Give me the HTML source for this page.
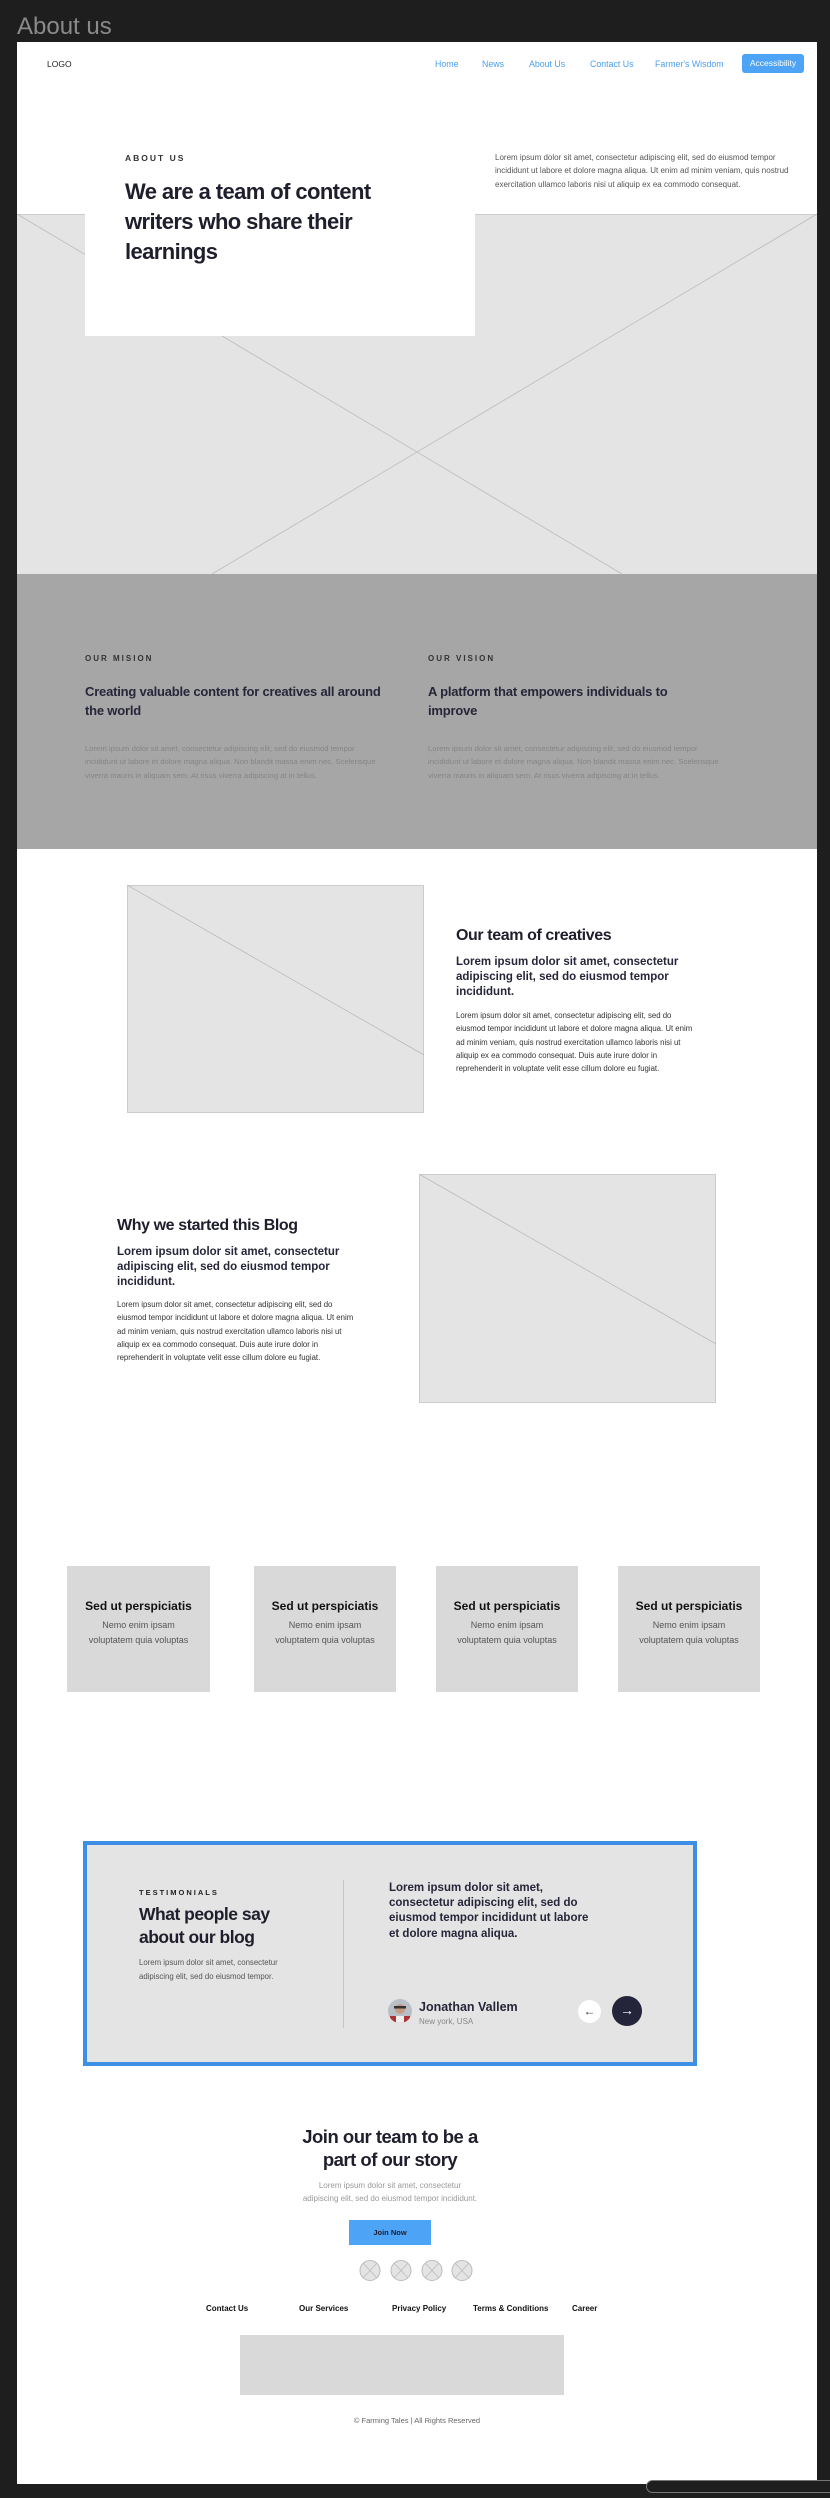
<!DOCTYPE html>
<html><head><meta charset="utf-8">
<style>
*{margin:0;padding:0;box-sizing:border-box}
body{width:830px;height:2498px;background:#1e1e1e;position:relative;overflow:hidden;font-family:"Liberation Sans",sans-serif;color:#22222e}
.a{position:absolute;white-space:nowrap}
.panel{position:absolute;left:17px;top:42px;width:800px;height:2442px;background:#fff}
.nav{font-size:8.8px;color:#4a9ff0;top:59px}
.lbl{font-size:8.5px;letter-spacing:2px;color:#333;font-weight:bold}
.card{position:absolute;top:1566px;height:126px;background:#d9d9d9;text-align:center}
.card b{display:block;font-size:12px;margin-top:33px;color:#111}
.card p{font-size:9px;color:#555;line-height:15px;margin-top:5px}
.fl{font-size:8px;font-weight:bold;color:#111;top:2304px}
</style></head><body>
<div class="a" style="left:17px;top:13px;font-size:24px;color:#8a8a8a">About us</div>
<div class="panel"></div>
<div class="a" style="left:47px;top:59px;font-size:8.5px;color:#222">LOGO</div>
<div class="a nav" style="left:435px">Home</div>
<div class="a nav" style="left:482px">News</div>
<div class="a nav" style="left:529px">About Us</div>
<div class="a nav" style="left:590px">Contact Us</div>
<div class="a nav" style="left:655px">Farmer's Wisdom</div>
<div class="a" style="left:742px;top:54px;width:62px;height:19px;background:#4da3f5;border-radius:3px;color:#fff;font-size:8.5px;text-align:center;line-height:19px">Accessibility</div>

<svg class="a" style="left:17px;top:214px" width="800" height="360"><rect width="800" height="360" fill="#e4e4e4"/><line x1="0" y1="0.5" x2="800" y2="0.5" stroke="#ccc"/><line x1="0" y1="0" x2="605" y2="360" stroke="#bbb" stroke-width="0.8"/><line x1="800" y1="0" x2="195" y2="360" stroke="#bbb" stroke-width="0.8"/></svg>
<div class="a" style="left:85px;top:214px;width:390px;height:122px;background:#fff"></div>
<div class="a lbl" style="left:125px;top:153px;font-size:8.5px">ABOUT US</div>
<div class="a" style="left:125px;top:177px;font-size:22px;font-weight:bold;line-height:30px;letter-spacing:-0.6px;color:#1e1e2c">We are a team of content<br>writers who share their<br>learnings</div>
<div class="a" style="left:495px;top:151px;font-size:8px;line-height:13.3px;color:#555">Lorem ipsum dolor sit amet, consectetur adipiscing elit, sed do eiusmod tempor<br>incididunt ut labore et dolore magna aliqua. Ut enim ad minim veniam, quis nostrud<br>exercitation ullamco laboris nisi ut aliquip ex ea commodo consequat.</div>

<div class="a" style="left:17px;top:574px;width:800px;height:275px;background:#a6a6a6"></div>
<div class="a lbl" style="left:85px;top:654px;font-size:8px">OUR MISION</div>
<div class="a lbl" style="left:428px;top:654px;font-size:8px">OUR VISION</div>
<div class="a" style="left:85px;top:682px;font-size:13px;font-weight:bold;line-height:19px;color:#26263a;letter-spacing:-0.2px">Creating valuable content for creatives all around<br>the world</div>
<div class="a" style="left:428px;top:682px;font-size:13px;font-weight:bold;line-height:19px;color:#26263a;letter-spacing:-0.2px">A platform that empowers individuals to<br>improve</div>
<div class="a" style="left:85px;top:742px;font-size:7.7px;line-height:13.4px;color:#858585">Lorem ipsum dolor sit amet, consectetur adipiscing elit, sed do eiusmod tempor<br>incididunt ut labore et dolore magna aliqua. Non blandit massa enim nec. Scelerisque<br>viverra mauris in aliquam sem. At risus viverra adipiscing at in tellus.</div>
<div class="a" style="left:428px;top:742px;font-size:7.7px;line-height:13.4px;color:#858585">Lorem ipsum dolor sit amet, consectetur adipiscing elit, sed do eiusmod tempor<br>incididunt ut labore et dolore magna aliqua. Non blandit massa enim nec. Scelerisque<br>viverra mauris in aliquam sem. At risus viverra adipiscing at in tellus.</div>

<svg class="a" style="left:127px;top:885px" width="297" height="228"><rect x="0.5" y="0.5" width="296" height="227" fill="#e4e4e4" stroke="#ccc"/><line x1="0" y1="0" x2="297" y2="170" stroke="#bbb" stroke-width="0.8"/></svg>
<div class="a" style="left:456px;top:927px;font-size:16px;font-weight:bold;color:#1e1e2c;letter-spacing:-0.4px">Our team of creatives</div>
<div class="a" style="left:456px;top:955px;font-size:11.5px;font-weight:bold;line-height:15px;color:#26263a">Lorem ipsum dolor sit amet, consectetur<br>adipiscing elit, sed do eiusmod tempor<br>incididunt.</div>
<div class="a" style="left:456px;top:1009px;font-size:7.8px;line-height:13.3px;color:#333">Lorem ipsum dolor sit amet, consectetur adipiscing elit, sed do<br>eiusmod tempor incididunt ut labore et dolore magna aliqua. Ut enim<br>ad minim veniam, quis nostrud exercitation ullamco laboris nisi ut<br>aliquip ex ea commodo consequat. Duis aute irure dolor in<br>reprehenderit in voluptate velit esse cillum dolore eu fugiat.</div>

<svg class="a" style="left:419px;top:1174px" width="297" height="229"><rect x="0.5" y="0.5" width="296" height="228" fill="#e4e4e4" stroke="#ccc"/><line x1="0" y1="0" x2="297" y2="170" stroke="#bbb" stroke-width="0.8"/></svg>
<div class="a" style="left:117px;top:1217px;font-size:16px;font-weight:bold;color:#1e1e2c;letter-spacing:-0.4px">Why we started this Blog</div>
<div class="a" style="left:117px;top:1245px;font-size:11.5px;font-weight:bold;line-height:15px;color:#26263a">Lorem ipsum dolor sit amet, consectetur<br>adipiscing elit, sed do eiusmod tempor<br>incididunt.</div>
<div class="a" style="left:117px;top:1298px;font-size:7.8px;line-height:13.3px;color:#333">Lorem ipsum dolor sit amet, consectetur adipiscing elit, sed do<br>eiusmod tempor incididunt ut labore et dolore magna aliqua. Ut enim<br>ad minim veniam, quis nostrud exercitation ullamco laboris nisi ut<br>aliquip ex ea commodo consequat. Duis aute irure dolor in<br>reprehenderit in voluptate velit esse cillum dolore eu fugiat.</div>

<div class="card" style="left:67px;width:143px"><b>Sed ut perspiciatis</b><p>Nemo enim ipsam<br>voluptatem quia voluptas</p></div>
<div class="card" style="left:254px;width:142px"><b>Sed ut perspiciatis</b><p>Nemo enim ipsam<br>voluptatem quia voluptas</p></div>
<div class="card" style="left:436px;width:142px"><b>Sed ut perspiciatis</b><p>Nemo enim ipsam<br>voluptatem quia voluptas</p></div>
<div class="card" style="left:618px;width:142px"><b>Sed ut perspiciatis</b><p>Nemo enim ipsam<br>voluptatem quia voluptas</p></div>

<div class="a" style="left:83px;top:1841px;width:614px;height:225px;background:#e4e4e4;border:4px solid #3d8fe6"></div>
<div class="a lbl" style="left:139px;top:1888px;font-size:7.5px;color:#222">TESTIMONIALS</div>
<div class="a" style="left:139px;top:1903px;font-size:17.5px;font-weight:bold;line-height:23px;color:#1e1e2c;letter-spacing:-0.5px">What people say<br>about our blog</div>
<div class="a" style="left:139px;top:1956px;font-size:7.8px;line-height:14px;color:#555">Lorem ipsum dolor sit amet, consectetur<br>adipiscing elit, sed do eiusmod tempor.</div>
<div class="a" style="left:343px;top:1880px;width:1px;height:148px;background:#c4c4c4"></div>
<div class="a" style="left:389px;top:1881px;font-size:11.5px;font-weight:bold;line-height:15.2px;color:#26263a">Lorem ipsum dolor sit amet,<br>consectetur adipiscing elit, sed do<br>eiusmod tempor incididunt ut labore<br>et dolore magna aliqua.</div>
<svg class="a" style="left:388px;top:1999px" width="24" height="24"><defs><clipPath id="c"><circle cx="12" cy="12" r="12"/></clipPath></defs><g clip-path="url(#c)"><rect width="24" height="24" fill="#b9bfc6"/><circle cx="12" cy="10" r="5" fill="#c89b86"/><rect x="6" y="7" width="12" height="2.5" fill="#333"/><rect x="2" y="17" width="20" height="8" fill="#a33"/><rect x="8" y="17" width="8" height="8" fill="#eee"/></g></svg>
<div class="a" style="left:419px;top:2000px;font-size:12.5px;font-weight:bold;color:#26263a">Jonathan Vallem</div>
<div class="a" style="left:419px;top:2017px;font-size:8px;color:#888">New york, USA</div>
<div class="a" style="left:578px;top:2000px;width:23px;height:23px;border-radius:50%;background:#fff;color:#333;font-size:12px;text-align:center;line-height:22px">&#8592;</div>
<div class="a" style="left:612px;top:1996px;width:30px;height:30px;border-radius:50%;background:#24243a;color:#fff;font-size:14px;text-align:center;line-height:29px">&#8594;</div>

<div class="a" style="left:190px;width:400px;top:2125px;text-align:center;font-size:18.5px;font-weight:bold;line-height:23px;color:#1e1e2c;letter-spacing:-0.5px">Join our team to be a<br>part of our story</div>
<div class="a" style="left:190px;width:400px;top:2179px;text-align:center;font-size:8px;line-height:13px;color:#999">Lorem ipsum dolor sit amet, consectetur<br>adipiscing elit, sed do eiusmod tempor incididunt.</div>
<div class="a" style="left:349px;top:2220px;width:82px;height:25px;background:#4da3f5;font-size:7.5px;font-weight:bold;color:#1e1e2c;text-align:center;line-height:25px">Join Now</div>
<svg class="a" style="left:359px;top:2259px" width="115" height="23">
<g fill="#e4e4e4" stroke="#bbb" stroke-width="1">
<circle cx="11" cy="11.5" r="10"/><circle cx="42" cy="11.5" r="10"/><circle cx="73" cy="11.5" r="10"/><circle cx="103" cy="11.5" r="10"/></g>
<g stroke="#bbb" stroke-width="0.8"><path d="M4 4L18 19M18 4L4 19M35 4L49 19M49 4L35 19M66 4L80 19M80 4L66 19M96 4L110 19M110 4L96 19"/></g></svg>
<div class="a fl" style="left:206px">Contact Us</div>
<div class="a fl" style="left:299px">Our Services</div>
<div class="a fl" style="left:392px">Privacy Policy</div>
<div class="a fl" style="left:473px">Terms &amp; Conditions</div>
<div class="a fl" style="left:572px">Career</div>
<div class="a" style="left:240px;top:2335px;width:324px;height:60px;background:#d9d9d9"></div>
<div class="a" style="left:217px;width:400px;top:2416px;text-align:center;font-size:7.5px;color:#666">© Farming Tales | All Rights Reserved</div>
<div class="a" style="left:646px;top:2480px;width:200px;height:13px;border:1px solid #777;border-radius:7px;background:#1e1e1e"></div>
</body></html>
